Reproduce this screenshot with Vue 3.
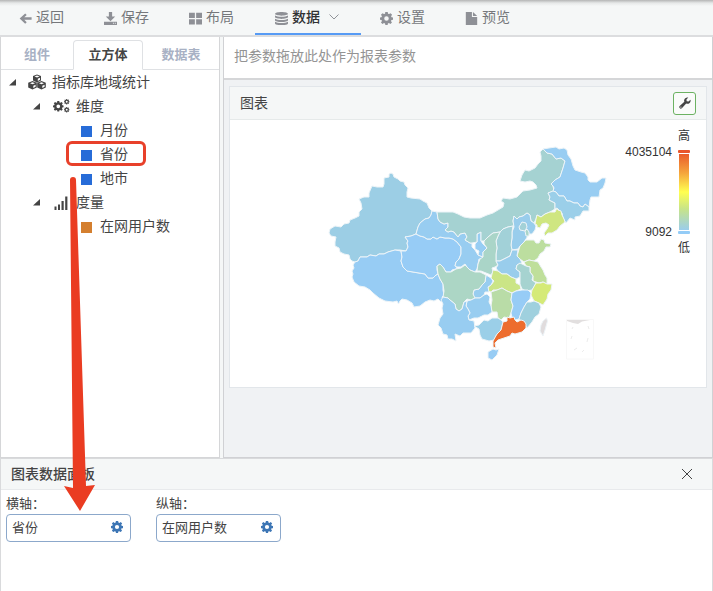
<script setup>
import { ref } from 'vue'

const gear =
  'M6.500 0h3l.4 2.100 1.300.5L13 1.400l1.900 1.900-1.300 1.800.6 1.300L16 6.700v2.800l-1.900.3-.6 1.300 1.200 1.800-1.900 1.900-1.800-1.200-1.300.5L9.400 16H6.600l-.4-1.900-1.300-.5-1.800 1.200-1.900-1.900 1.200-1.800-.5-1.300L0 9.500V6.700l1.800-.3.6-1.300L1.200 3.300l1.900-1.900 1.800 1.200 1.300-.5zM8 5.200a2.800 2.800 0 1 0 0 5.600 2.800 2.800 0 0 0 0-5.600z'

const menu = [
  { label: '返回', icon: 'M7.600 1.700 9.500 3.600 6.500 6.600H15.500v3H6.500l3 3L7.600 14.500 .8 8.100z' },
  { label: '保存', icon: 'M6 0h4v5.500h3.800L8 11.300 2.200 5.500H6zM0 12h16v4H0zM11 13.300v1.200h1.200v-1.200zM13.300 13.300v1.200h1.200v-1.200z' },
  { label: '布局', icon: 'M0 1h7.200v6.500H0zM8.800 1H16v6.500H8.800zM0 9h7.200v6.500H0zM8.800 9H16v6.500H8.800z' },
  {
    label: '数据',
    active: true,
    icon: 'M8 0c4.400 0 8 1 8 2.300S12.400 4.600 8 4.600 0 3.600 0 2.300 3.600 0 8 0zM0 4.300c3 2 13 2 16 0v2c0 3-16 3-16 0zM0 8.200c3 2 13 2 16 0v2c0 3-16 3-16 0zM0 12c3 2 13 2 16 0v2c0 3-16 3-16 0z'
  },
  { label: '设置', icon: gear },
  { label: '预览', icon: 'M1 0h7.500v6H15v10H1zM9.800 0 15 4.800H9.800z' }
]

const tabs = ['组件', '立方体', '数据表']
const activeTab = ref('立方体')

const tree = [
  { label: '指标库地域统计', level: 1, icon: 'cubes' },
  { label: '维度', level: 2, icon: 'gears' },
  { label: '月份', level: 3, color: 'blue' },
  { label: '省份', level: 3, color: 'blue', marked: true },
  { label: '地市', level: 3, color: 'blue' },
  { label: '度量', level: 2, icon: 'signal' },
  { label: '在网用户数', level: 3, color: 'orange' }
]

const axes = [
  { label: '横轴：', value: '省份' },
  { label: '纵轴：', value: '在网用户数' }
]

const provinces = [
  { name: '新疆', fill: '#9ccee5', points: '391,173 393,174 394,177 398,179 400,181 404,182 405,185 408,188 407,192 407,197 411,198 420,199 423,201 427,203 429,208 432,211 431,215 429,218 425,219 420,223 418,227 416,234 411,236 405,237 408,241 407,243 408,247 406,251 400,250 395,250 388,252 384,254 379,254 376,256 370,255 367,257 360,257 358,261 355,262 352,261 350,259 349,255 344,254 340,252 339,248 335,246 335,242 336,237 331,236 329,233 330,229 335,226 341,227 344,224 349,223 350,220 355,218 359,216 359,212 362,209 361,203 359,199 364,197 369,197 369,193 372,186 377,187 383,187 384,184 384,178 389,177 389,174' },
  { name: '西藏', fill: '#97ccf4', points: '355,262 358,261 360,257 367,257 370,255 376,256 379,254 384,254 388,252 395,250 401,251 402,257 401,261 403,267 407,271 413,272 419,273 425,274 428,278 433,278 436,275 438,274 440,279 443,284 443,290 444,295 442,297 443,300 441,302 438,299 434,301 430,300 425,302 420,306 414,307 412,303 407,300 402,299 400,301 398.500,304 397,301 393,302 385,301 379,298 373,293 370,290 365,287 359,286 354,282 352,277 353,274 352,271 354,268 353,265' },
  { name: '青海', fill: '#97ccf6', points: '405,237 411,236 416,234 420,236 424,237 427,239 431,239 433,237 437,239 440,237 445,238 449,238 453,239 457,242 461,247 461,254 459,259 456,262 455,266 457,267 456,269 452,270 451,272 446,272 443,267 440,264 437,266 437,270 438,274 436,275 433,278 428,278 425,274 419,273 413,272 407,271 403,267 401,261 402,257 401,251 406,251 408,247 407,243 408,241' },
  { name: '甘肃', fill: '#98cdf1', points: '432,211 437,212 438,219 440,222 444,224 448,223 448,227 445,230 448,232 451,231 454,232 458,237 460,234 465,233 467,237 465,240 470,243 472,243 472,247 475,250 478,255 483,257 482,259 479,259 478,264 477,269 475,272 470,270 467,267 465,264 461,267 457,267 455,266 456,262 459,259 461,254 461,247 457,242 453,239 449,238 445,238 440,237 437,239 433,237 431,239 427,239 424,237 420,236 416,234 418,227 420,223 425,219 429,218 431,215' },
  { name: '宁夏', fill: '#97cdf3', points: '475,244 477,242 477,234 481,232 481,241 483,244 487,248 483,252 483,257 478,255 479,251 475,249' },
  { name: '内蒙古', fill: '#a5d2d2', points: '437,212 445,212 453,212 458,214 464,217 470,218 480,218 487,215 493,213 498,210 503,207 504,203 501,201 503,198 510,199 517,197 520,194 523,191 530,190 537,188 536,185 533,182 530,181 525,182 520,181 522,175 525,170 529,171 535,168 538,164 541,161 541,156 540,152 543,149 547,149 547,153 552,154 556,159 561,158 565,161 563,168 560,177 555,180 551,184 553,186 554,191 548,193 550,197 549,200 555,203 555,209 550,212 545,214 541,217 537,215 536,219 534,223 531,221 530,215 527,213 523,216 519,217 517,219 514,216 513,221 514,226 508,227 503,229 500,232 493,233 488,237 484,241 481,241 481,232 477,234 477,242 472,243 470,243 465,240 467,237 465,233 460,234 458,237 454,232 451,231 448,232 445,230 448,227 448,223 444,224 440,222 438,219' },
  { name: '黑龙江', fill: '#98cdf2', points: '543,149 549,148 556,147 559,149 564,148 567,150 568,155 571,159 573,166 575,170 581,172 585,173 588,177 588,180 590,182 597,182 602,178 606,178 605,183 603,188 600,190 599,197 591,197 590,200 589,207 585,204 583,207 580,206 578,203 574,203 570,201 567,201 564,196 559,196 556,192 553,191 554,188 553,186 551,184 555,180 560,177 563,168 565,161 561,158 556,159 552,154 547,153' },
  { name: '吉林', fill: '#9bcfe9', points: '548,193 553,191 556,192 559,196 564,196 567,201 570,201 574,203 578,203 580,206 583,207 585,204 589,207 589,211 583,211 580,216 575,217 575,220 570,218 566,223 563,218 562,213 557,208 555,209 555,203 549,200 550,197' },
  { name: '辽宁', fill: '#cfe681', points: '557,208 558,210 561,211 562,215 564,219 565,222 560,226 557,230 552,233 548,233 545,236 544,233 547,229 549,225 546,223 542,224 540,228 537,227 537,225 535,224 536,219 537,215 541,217 545,214 550,212 555,212' },
  { name: '河北', fill: '#99cdec', points: '514,216 517,219 519,217 523,216 527,213 530,215 531,221 534,223 536,226 535,230 532,234 529,234 526,239 524,242 520,246 518,249 512,250 511,245 512,238 512,232 514,227 513,221' },
  { name: '北京', fill: '#a3d1d7', points: '519,227 522,222 526,223 527,227 525,231 520,230' },
  { name: '天津', fill: '#aad5c9', points: '525,231 527,229 529,232 529,236 526,236' },
  { name: '山西', fill: '#a2d1d8', points: '500,232 503,229 508,227 513,226 512,232 512,238 511,245 512,250 510,256 504,259 500,261 496,261 496,254 497,248 496,241 498,236' },
  { name: '陕西', fill: '#aad5c8', points: '500,232 498,236 496,241 497,248 496,254 496,261 498,265 495,267 492,268 493,272 491,275 486,273 481,271 477,271 478,264 480,259 483,257 483,252 487,248 484,244 484,241 488,237 493,233' },
  { name: '山东', fill: '#bcde9f', points: '520,246 524,242 526,240 534,240 536,243 539,243 541,239 544,240 545,243 551,244 550,247 546,247 544,251 540,254 538,258 534,261 529,260 524,262 520,259 517,256' },
  { name: '河南', fill: '#99cdec', points: '498,265 496,261 500,261 504,259 510,256 512,250 518,250 517,256 520,259 522,263 517,265 516,269 520,272 520,277 516,279 511,277 507,274 502,274 498,271 496,268' },
  { name: '江苏', fill: '#bfdf9b', points: '524,262 529,260 534,261 538,262 541,267 543,270 545,275 547,278 547,284 543,282 539,283 533,281 533,276 530,272 530,267 526,266' },
  { name: '安徽', fill: '#a6d3d0', points: '520,263 526,266 530,267 530,272 533,276 532,280 536,283 534,287 532,290 526,291 522,289 520,284 520,278 520,272 516,269 517,265' },
  { name: '湖北', fill: '#cbe586', points: '493,270 498,271 502,274 507,274 511,277 516,279 516,283 520,285 521,289 516,291 512,293 507,291 502,288 497,290 493,290 491,292 488,291 488,287 491,285 494,281 491,278' },
  { name: '重庆', fill: '#98cdf0', points: '486,275 491,278 493,281 491,285 488,287 489,292 485,292 484,295 480,298 474,298 473,294 474,290 479,289 482,285 485,282' },
  { name: '四川', fill: '#acd6c5', points: '437,266 440,264 443,267 446,272 451,272 456,269 461,268 465,265 470,270 475,272 480,272 486,275 485,282 482,285 479,289 474,290 473,294 475,298 471,300 467,299 464,302 462,309 459,311 456,309 455,304 450,300 448,298 443,297 444,291 443,284 440,279 438,274' },
  { name: '湖南', fill: '#b9dca7', points: '491,292 497,290 502,288 507,291 512,293 511,300 513,306 511,313 509,318 504,317 501,320 498,318 497,312 492,312 491,306 492,300' },
  { name: '贵州', fill: '#98cdf0', points: '467,301 471,300 475,298 480,298 484,295 487,294 490,297 489,302 491,306 492,312 488,315 484,315 478,318 474,318 469,320 468,316 470,313 468,309 466,306' },
  { name: '江西', fill: '#97ccf6', points: '512,293 516,291 522,290 528,290 531,293 530,299 527,302 524,307 521,313 519,319 515,320 512,317 511,313 513,306 511,300' },
  { name: '浙江', fill: '#d5ea78', points: '536,283 541,283 543,282 547,284 552,284 551,290 548,294 547,299 543,305 539,303 534,301 531,295 532,290' },
  { name: '福建', fill: '#9fd0de', points: '527,302 531,302 534,301 539,303 541,307 539,314 535,317 532,322 527,328 524,323 519,319 521,313 524,307' },
  { name: '云南', fill: '#98cdf1', points: '443,297 448,298 450,300 455,304 456,309 459,311 462,309 464,302 467,301 466,306 468,309 470,313 468,316 469,320 474,321 475,328 471,333 463,333 460,336 455,334 456,341 452,339 448,339 447,335 443,334 441,328 438,325 440,318 443,314 442,308 443,304 441,300' },
  { name: '广西', fill: '#9bcfe8', points: '474,326 479,325 484,320 488,321 492,318 498,318 501,320 503,322 501,330 497,334 494,340 489,341 482,339 480,335 479,329' },
  { name: '广东', fill: '#ed6d2e', points: '507,317 510,318 514,317 515,320 517,322 521,320 524,321 526,324 526,328 522,332 515,334 512,333 510,336 504,338 498,340 495,343 496,348 493,347 493,341 497,334 501,330 503,322 507,321' },
  { name: '海南', fill: '#97ccf4', points: '488,352 493,349 496,350 499,349 497,355 492,360 488,358' },
  { name: '台湾', fill: '#e0dcdd', points: '546.500,318 547.500,321 545,330 543,336 540,331 541,325 543,321' }
]
</script>

<template>
  <div class="page">
    <nav class="nav">
      <a v-for="m in menu" :key="m.label" href="#" class="nav-item" :class="{ active: m.active }">
        <svg class="nav-icon" viewBox="0 0 16 16"><path :d="m.icon" fill-rule="evenodd" /></svg>
        <span>{{ m.label }}</span>
        <svg v-if="m.active" class="chevron" viewBox="0 0 12 8"><path d="M1.500 1.500l4.500 4.500 4.500-4.500" /></svg>
      </a>
    </nav>

    <main class="main">
      <aside class="side">
        <div class="tabs" role="tablist">
          <button
            v-for="t in tabs"
            :key="t"
            class="tab"
            role="tab"
            :class="{ on: t === activeTab }"
            :aria-selected="t === activeTab"
            @click="activeTab = t"
          >{{ t }}</button>
        </div>
        <ul class="tree">
          <li v-for="n in tree" :key="n.label" class="node" :class="'level-' + n.level">
            <svg v-if="n.icon" class="caret" viewBox="0 0 7 7"><path d="M7 0v6.500H0z" /></svg>
            <svg v-if="n.icon === 'cubes'" class="node-icon" viewBox="0 0 18 16">
              <path d="M9 .5l4 1.500v4.500L9 8.500 5 6.500V2zM4.500 7l4.300 1.700v4.800l-4.300 2-4.300-2V8.700zM13.500 7l4.300 1.700v4.800l-4.300 2-4.300-2V8.700z" />
              <path class="face" d="M9 1.400l2.500 1L9 3.400 6.500 2.400zM4.500 8.200l2.500 1-2.500 1-2.500-1zM13.500 8.200l2.500 1-2.500 1-2.500-1zM9.800 4.800l2.200-1v2l-2.200 1.200zM5.300 11.800l2.300-1v2L5.300 14zM14.300 11.800l2.300-1v2L14.300 14z" />
            </svg>
            <svg v-else-if="n.icon === 'gears'" class="node-icon" viewBox="0 0 18 16">
              <g fill-rule="evenodd">
                <path transform="translate(1 3) scale(.66)" :d="gear" />
                <path transform="translate(12 1) scale(.34)" :d="gear" />
                <path transform="translate(12 9) scale(.34)" :d="gear" />
              </g>
            </svg>
            <svg v-else-if="n.icon === 'signal'" class="node-icon" viewBox="0 0 18 16">
              <path d="M2.500 12.500h2V16h-2zM6 10.500h2V16H6zM9.500 7h2.200v9H9.500zM13.200 2.500h2.200V16h-2.200z" />
            </svg>
            <i v-else class="dot" :class="n.color"></i>
            <span>{{ n.label }}</span>
            <b v-if="n.marked" class="mark"></b>
          </li>
        </ul>
      </aside>

      <section class="work">
        <div class="params">把参数拖放此处作为报表参数</div>
        <div class="canvas">
          <article class="card">
            <header class="card-head">
              <h2>图表</h2>
              <button class="tool" aria-label="设置">
                <svg viewBox="0 0 16 16">
                  <path d="M15.300 3.600 12.700 6 10.300 5.600 9.900 3.300 12.400.8C10.100.1 7.500 1.300 6.900 3.900c-.2.900-.1 1.700.2 2.500L.9 12.100c-1.800 1.900.9 4.700 2.900 2.900l5.800-6.200c3.500 1.200 6.700-1.900 5.700-5.200zM2.600 12.600a.8.8 0 1 1 0 1.600.8.8 0 0 1 0-1.600z" fill-rule="evenodd" />
                </svg>
              </button>
            </header>
            <div class="chart">
              <svg class="map" viewBox="230 120 388 267">
                <polygon v-for="p in provinces" :key="p.name" :points="p.points" :fill="p.fill" class="province" />
                <path d="M567 319.500l23-.5 0 1-8 1.500-4 2.500-5-1-6-2z" fill="#e2dfdf" />
                <path d="M566.500 319.500h27v39.500h-27z" fill="none" stroke="#f8f8f8" />
                <path d="M573 327l-1 2M588 326l1 3M572 336l-1 3M588 338l-1 4M574 350l3-2M584 350l-2 2" stroke="#ececec" />
              </svg>
              <div class="legend">
                <span class="end">高</span>
                <div class="values"><span>4035104</span><span>9092</span></div>
                <div class="scale"><i class="cap high"></i><i class="ramp"></i><i class="cap low"></i></div>
                <span class="end">低</span>
              </div>
            </div>
          </article>
        </div>
      </section>
    </main>

    <section class="panel">
      <header class="panel-head">
        <h2>图表数据面板</h2>
        <button class="close" aria-label="关闭">
          <svg viewBox="0 0 12 12"><path d="M1 1l10 10M11 1L1 11" /></svg>
        </button>
      </header>
      <div class="fields">
        <div v-for="a in axes" :key="a.label" class="field">
          <span class="field-label">{{ a.label }}</span>
          <div class="drop">
            <span>{{ a.value }}</span>
            <button class="cog" aria-label="设置">
              <svg viewBox="0 0 16 16"><path :d="gear" fill-rule="evenodd" /></svg>
            </button>
          </div>
        </div>
      </div>
    </section>

    <svg class="arrow" viewBox="0 0 32 336">
      <path d="M6 5Q6 2 9 2t3 3L22 311l9-1-15 26L0 311l9 2z" />
    </svg>
  </div>
</template>

<style>
body {
  margin: 0;
}
</style>

<style scoped>
* {
  box-sizing: border-box;
}
.page {
  position: relative;
  display: flex;
  flex-direction: column;
  min-height: 100vh;
  background: #f5f7f7;
  color: #444;
  font: 14px/24px "Liberation Sans", "Noto Sans CJK SC", sans-serif;
}
button {
  padding: 0;
  border: 0;
  background: none;
  font: inherit;
  color: inherit;
  cursor: pointer;
}
h2 {
  margin: 0;
  font-size: 14px;
  font-weight: 400;
}
svg {
  display: block;
  fill: currentColor;
}
.nav {
  display: flex;
  height: 37px;
  border-bottom: 2px solid #dcdddf;
  background: linear-gradient(#b4b5b5, #e6e8e8 3px, #f5f7f7 6px);
}
.nav-item {
  display: flex;
  align-items: center;
  gap: 4px;
  padding: 0 21px 0 19px;
  border-bottom: 2px solid transparent;
  color: #75777b;
  text-decoration: none;
}
.nav-item.active {
  border-color: #579bf5;
  color: #303133;
  font-weight: 500;
}
.nav-icon {
  width: 13px;
  height: 13px;
  margin-top: 3px;
  color: #8e9096;
}
.active .nav-icon {
  margin-left: 1px;
}
.chevron {
  width: 12px;
  height: 8px;
  margin-left: 4px;
  fill: none;
  stroke: #909399;
}
.main {
  display: grid;
  grid-template-columns: 220px 1fr;
  gap: 3px;
  flex: 1;
}
.side {
  border: 1px solid #d5d6d8;
  border-top-width: 0;
  background: #fff;
}
.tabs {
  display: grid;
  grid-template-columns: 72px 70px 1fr;
  height: 33px;
  padding-top: 3px;
  background: linear-gradient(#dfe1e4, #dfe1e4) bottom / 100% 1px no-repeat;
}
.tab {
  border: 1px solid transparent;
  color: #a8b1c4;
  font-size: 13px;
  line-height: 28px;
  font-weight: 700;
}
.tab.on {
  border-color: #dfe1e4;
  border-bottom-color: #fff;
  border-radius: 4px 4px 0 0;
  background: #fff;
  color: #444;
}
.tree {
  margin: 0;
  padding: 0;
  list-style: none;
}
.node {
  position: relative;
  display: flex;
  align-items: center;
  height: 24px;
}
.level-1 {
  padding-left: 8px;
}
.level-2 {
  padding-left: 32px;
}
.level-3 {
  padding-left: 80px;
}
.caret {
  width: 7px;
  height: 7px;
  margin-right: 12px;
}
.node-icon {
  width: 18px;
  height: 16px;
  margin-right: 6px;
}
.face {
  fill: #fff;
}
.dot {
  width: 11px;
  height: 11px;
  margin: 3px 8px 0 0;
}
.blue {
  background: #276cd8;
}
.orange {
  background: #d47f2f;
}
.mark {
  position: absolute;
  left: 65px;
  top: -1px;
  width: 80px;
  height: 25px;
  border: 3px solid #e8402a;
  border-radius: 6px;
}
.work {
  display: flex;
  flex-direction: column;
  border: 1px solid #d0d1d4;
  border-top-width: 0;
  background: #f0f2f4;
}
.params {
  height: 43px;
  padding: 0 10px;
  border-bottom: 2px solid #d5d6d8;
  background: #fff;
  color: #949494;
  line-height: 39px;
}
.canvas {
  padding: 6px 5px;
}
.card {
  border: 1px solid #e2e6ea;
  background: #fff;
}
.card-head {
  display: flex;
  align-items: center;
  justify-content: space-between;
  height: 33px;
  padding: 0 10px;
  border-bottom: 1px solid #e6eaea;
  background: #f5f7f7;
}
.tool {
  display: grid;
  place-items: center;
  width: 23px;
  height: 23px;
  border: 1px solid #6cb262;
  border-radius: 3px;
  background: #fafbfa;
}
.tool svg {
  width: 12px;
  height: 12px;
}
.chart {
  display: flex;
}
.map {
  flex: 1;
  min-width: 0;
  height: 267px;
}
.province {
  stroke: #edf4f8;
  stroke-width: 1;
  stroke-linejoin: round;
}
.legend {
  display: grid;
  grid-template-columns: 1fr 12px;
  grid-template-rows: 16px 84px 16px;
  gap: 6px 6px;
  align-content: start;
  width: 88px;
  padding: 8px 16px 0 0;
  color: #333;
  font-size: 12px;
  line-height: 16px;
}
.end {
  grid-column: 2;
}
.values {
  display: flex;
  flex-direction: column;
  justify-content: space-between;
  margin: -6px 0;
  text-align: right;
}
.scale {
  display: flex;
  flex-direction: column;
  align-items: center;
  gap: 1px;
}
.cap {
  width: 12px;
  height: 3px;
  border-radius: 1px;
}
.high {
  background: #e9552b;
}
.low {
  background: #94ccf7;
}
.ramp {
  flex: 1;
  width: 10px;
  background: linear-gradient(#ea5c2b, #f5a53c 25%, #ffff50 50%, #c8e488 72%, #9acdec);
}
.panel {
  min-height: 133px;
  border: 1px solid #d9dadc;
  border-width: 1px 1px 0;
  background: #fff;
}
.panel-head {
  display: flex;
  align-items: center;
  justify-content: space-between;
  height: 31px;
  padding: 0 19px 0 10px;
  border-bottom: 1px solid #e8eaec;
  background: #f5f7f7;
}
.panel-head h2 {
  font-weight: 500;
}
.close svg {
  width: 12px;
  height: 12px;
  fill: none;
  stroke: #444;
}
.fields {
  display: flex;
  gap: 25px;
  padding: 4px 5px;
  font-size: 13px;
}
.field {
  width: 125px;
}
.field-label {
  display: block;
  line-height: 20px;
}
.drop {
  display: flex;
  align-items: center;
  justify-content: space-between;
  height: 28px;
  padding: 0 7px 0 5px;
  border: 1px solid #8ca8cb;
  border-radius: 4px;
}
.cog svg {
  width: 12px;
  height: 12px;
  margin-bottom: 3px;
  color: #3d76b5;
}
.arrow {
  position: absolute;
  left: 64px;
  top: 175px;
  width: 32px;
  height: 336px;
  color: #ea3c22;
  pointer-events: none;
}
</style>
